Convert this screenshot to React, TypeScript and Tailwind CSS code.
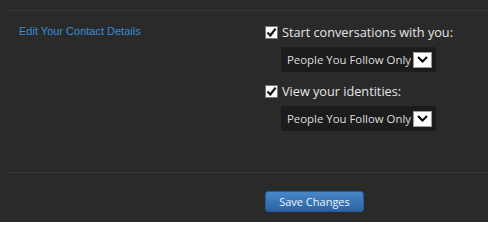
import React from "react";

function Check() {
  return (
    <span className="flex h-[13px] w-[13px] shrink-0 items-center justify-center border border-[#767676] bg-white">
      <svg width="11" height="11" viewBox="0 0 11 11">
        <path d="M1.5 5.5 L4.3 8.5 L9.6 1.6" fill="none" stroke="#111" strokeWidth="2.2" />
      </svg>
    </span>
  );
}

function FakeSelect({ value }: { value: string }) {
  return (
    <div className="flex h-[25px] w-[155px] items-center justify-between rounded-[3px] bg-[#1c1c1c] pl-[6px] pr-[4px]">
      <span className="whitespace-nowrap text-[11.4px] leading-[14px] text-[#dcdcdc]">{value}</span>
      <span className="flex h-[16px] w-[19px] items-center justify-center border border-[#9a9a9a] bg-white">
        <svg width="11" height="7" viewBox="0 0 11 7">
          <path d="M1 1 L5.5 5.5 L10 1" fill="none" stroke="#000" strokeWidth="2" />
        </svg>
      </span>
    </div>
  );
}

export default function App() {
  return (
    <div
      className="h-[222px] w-full bg-[#2a2a2a] pl-[8px] pt-[10px]"
      style={{ fontFamily: '"Open Sans", sans-serif' }}
    >
      <div className="flex border-t border-[#3a3a3a]">
        <div className="w-[257px] pl-[11px] pt-[14px]">
          <a
            className="block text-[11px] leading-[13px] text-[#3a8dd6]"
            style={{ fontFamily: '"Liberation Sans", sans-serif' }}
          >
            Edit Your Contact Details
          </a>
        </div>
        <div className="flex flex-col pt-[13px]">
          <label className="flex items-center gap-[4px]">
            <Check />
            <span className="text-[12.7px] leading-[16px] text-[#e6e6e6]">Start conversations with you:</span>
          </label>
          <div className="ml-[16px] mt-[7px]">
            <FakeSelect value="People You Follow Only" />
          </div>
          <label className="mt-[11px] flex items-center gap-[4px]">
            <Check />
            <span className="text-[12.7px] leading-[16px] text-[#e6e6e6]">View your identities:</span>
          </label>
          <div className="ml-[16px] mt-[7px]">
            <FakeSelect value="People You Follow Only" />
          </div>
        </div>
      </div>
      <div className="mt-[41px] border-t border-[#3a3a3a] pl-[257px] pt-[15px]">
        <button className="h-[21px] w-[99px] rounded-[3px] border border-[#2a5b94] bg-gradient-to-b from-[#4787c9] to-[#2d63a3] text-[11px] leading-[19px] text-[#eef3fa]">
          Save Changes
        </button>
      </div>
    </div>
  );
}
